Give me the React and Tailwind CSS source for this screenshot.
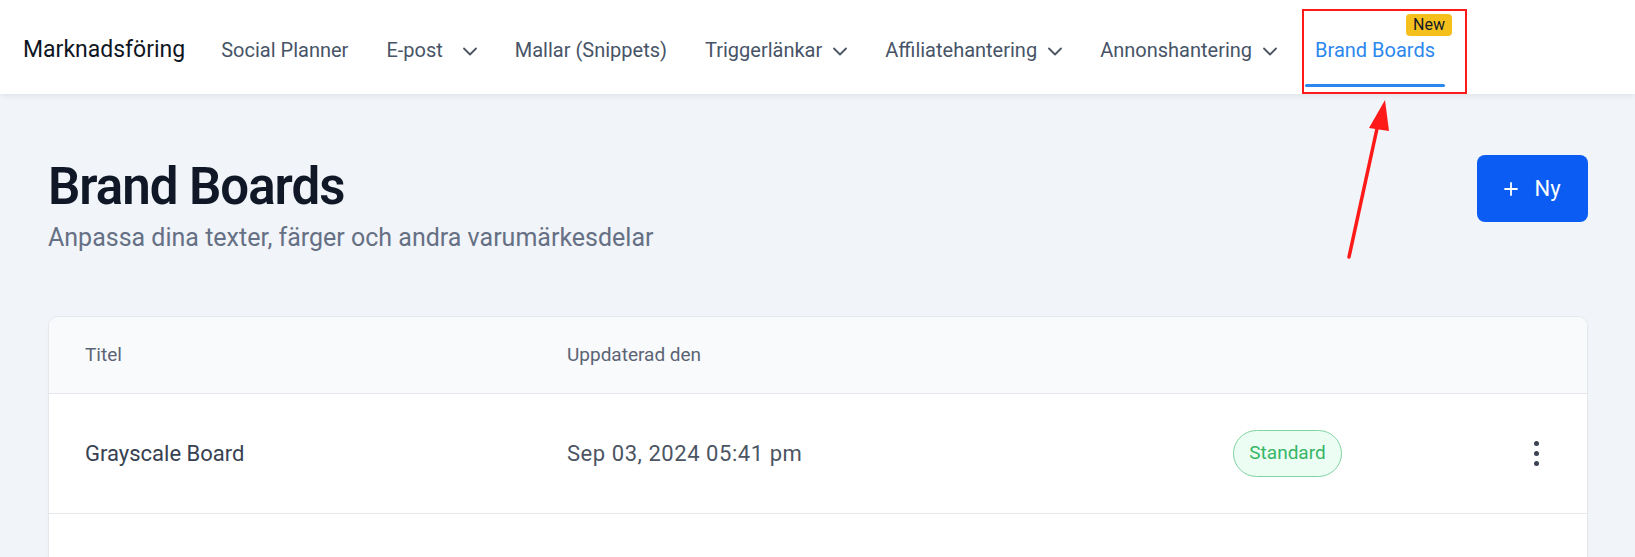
import React from "react";

const font = { fontFamily: "Roboto, 'Noto Sans', Arial, sans-serif" };

function Chevron({ gap }) {
  return (
    <svg width="14" height="9" viewBox="0 0 14 9" fill="none" className={gap + " mt-[2px]"}>
      <polyline points="1,1.5 7,7.5 13,1.5" stroke="#4b5563" strokeWidth="1.8" strokeLinecap="round" strokeLinejoin="round" />
    </svg>
  );
}

function NavItem({ label, dropdown, wide, active, badge }) {
  return (
    <div className="relative flex h-full items-center px-[10px]">
      <span className={active ? "text-[20px] leading-[28px] text-[#2b87ee]" : "text-[20px] leading-[28px] text-[#475467]"}>
        {label}
      </span>
      {dropdown && <Chevron gap={wide ? "ml-[20px]" : "ml-[11px]"} />}
      {badge && (
        <span className="absolute right-[-7px] top-[8px] flex h-[22px] items-center rounded-[4px] bg-[#f6c01c] px-[7px] text-[16px] leading-none text-[#111827]">
          {badge}
        </span>
      )}
      {active && <span className="absolute bottom-[7px] left-0 right-0 h-[3px] rounded-full bg-[#2b87ee]" />}
    </div>
  );
}

function Kebab() {
  return (
    <div className="flex w-[24px] flex-col items-center gap-[5px]">
      <span className="h-[5px] w-[5px] rounded-full bg-[#3b4354]" />
      <span className="h-[5px] w-[5px] rounded-full bg-[#3b4354]" />
      <span className="h-[5px] w-[5px] rounded-full bg-[#3b4354]" />
    </div>
  );
}

export default function App() {
  return (
    <div className="relative h-screen overflow-hidden bg-[#f1f4f8]" style={font}>
      {/* top navigation */}
      <header className="relative z-10 flex h-[94px] items-stretch bg-white pl-[23px] shadow-[0_2px_5px_rgba(16,24,40,0.07)]">
        <div className="mr-[26px] flex items-center pt-[6px] text-[23px] leading-[28px] text-[#0f1623]">
          Marknadsföring
        </div>
        <nav className="flex items-stretch gap-[18px] pt-[6px]">
          <NavItem label="Social Planner" />
          <NavItem label="E-post" dropdown wide />
          <NavItem label="Mallar (Snippets)" />
          <NavItem label="Triggerlänkar" dropdown />
          <NavItem label="Affiliatehantering" dropdown />
          <NavItem label="Annonshantering" dropdown />
          <NavItem label="Brand Boards" active badge="New" />
        </nav>
      </header>

      {/* page content */}
      <main className="pl-[48px] pr-[47px] pt-[61px]">
        <div className="flex items-start justify-between">
          <div>
            <h1 className="mt-[6px] text-[51px] font-semibold leading-none tracking-[-0.02em] text-[#101828]">
              Brand Boards
            </h1>
            <p className="mt-[10px] text-[25px] leading-[32px] text-[#667085]">
              Anpassa dina texter, färger och andra varumärkesdelar
            </p>
          </div>
          <button className="flex h-[67px] w-[111px] items-center justify-center gap-[16px] rounded-[8px] bg-[#0b5cf2] text-white">
            <svg width="14" height="14" viewBox="0 0 14 14" fill="none">
              <path d="M7 1v12M1 7h12" stroke="white" strokeWidth="1.8" strokeLinecap="round" />
            </svg>
            <span className="text-[22px] leading-none">Ny</span>
          </button>
        </div>

        <div className="mt-[62px] overflow-hidden rounded-[10px] border border-[#e4e7ec] bg-white shadow-[0_1px_2px_rgba(16,24,40,0.04)]">
          <div className="flex h-[77px] items-center border-b border-[#e4e7ec] bg-[#f8fafc] pl-[36px] text-[19px] text-[#5b6474]">
            <div className="w-[482px]">Titel</div>
            <div>Uppdaterad den</div>
          </div>
          <div className="flex h-[120px] items-center border-b border-[#e4e7ec] pl-[36px] pr-[39px]">
            <div className="w-[482px] text-[22px] text-[#374151]">Grayscale Board</div>
            <div className="w-[666px] text-[22px] tracking-[0.025em] text-[#4b5563]">Sep 03, 2024 05:41 pm</div>
            <span className="flex h-[47px] w-[109px] items-center justify-center rounded-full border border-[#7fd3a0] bg-[#ecfdf3] text-[19px] text-[#36b566]">
              Standard
            </span>
            <div className="ml-auto">
              <Kebab />
            </div>
          </div>
          <div className="h-[120px]" />
        </div>
      </main>

      {/* annotation: highlight around the new tab and pointer arrow */}
      <div className="pointer-events-none absolute left-[1302px] top-[9px] z-20 h-[85px] w-[165px] border-2 border-[#ff1a1a]" />
      <svg className="pointer-events-none absolute left-0 top-0 z-20" width="1635" height="557">
        <line x1="1349" y1="257" x2="1378" y2="124" stroke="#ff1a1a" strokeWidth="3.5" strokeLinecap="round" />
        <polygon points="1385,100 1369,128 1389,131" fill="#ff1a1a" />
      </svg>
    </div>
  );
}
